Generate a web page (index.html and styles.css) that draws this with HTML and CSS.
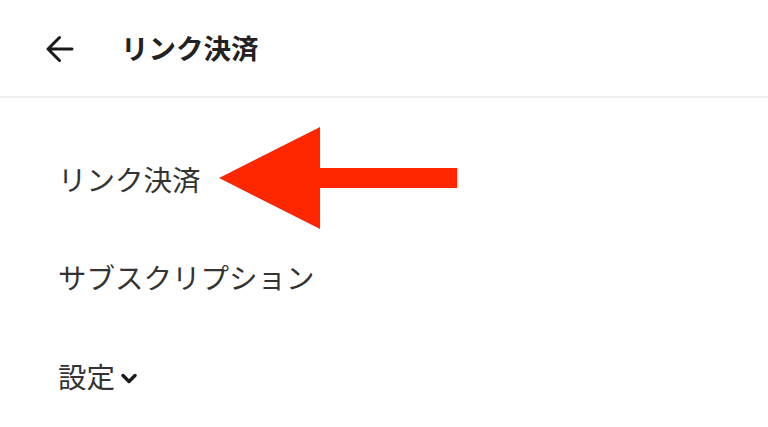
FILE: index.html
```html
<!DOCTYPE html>
<html lang="ja">
<head>
<meta charset="utf-8">
<link rel="stylesheet" href="styles.css">
</head>
<body>
<header class="topbar">
  <svg class="back" width="28" height="28" viewBox="0 0 28 28" aria-hidden="true">
    <path d="M26 14H2.5M13.5 2.5L2 14l11.5 11.5" fill="none" stroke="#1a1a1a" stroke-width="3" stroke-linecap="round" stroke-linejoin="round"/>
  </svg>
  <h1 class="title">リンク決済</h1>
</header>
<nav class="menu">
  <div class="item">リンク決済</div>
  <div class="item">サブスクリプション</div>
  <div class="item">設定<svg class="chev" width="16" height="12" viewBox="0 0 16 12" aria-hidden="true"><path d="M2 2.5l6 6 6-6" fill="none" stroke="#1a1a1a" stroke-width="3.4" stroke-linecap="round" stroke-linejoin="round"/></svg></div>
</nav>
<svg class="pointer" width="240" height="104" viewBox="0 0 240 104" aria-hidden="true">
  <polygon points="0,51 101,0 101,41 238,41 238,61 101,61 101,102" fill="#ff2700"/>
</svg>
</body>
</html>
```
FILE: styles.css
```css
html, body {
  margin: 0;
  padding: 0;
  background: #fff;
}
body {
  font-family: "Noto Sans CJK JP", "Noto Sans", sans-serif;
  position: relative;
  width: 768px;
  height: 427px;
  overflow: hidden;
}
.topbar {
  display: flex;
  align-items: center;
  height: 96px;
  padding-left: 46px;
  border-bottom: 2px solid #efefef;
  box-sizing: content-box;
}
.back {
  display: block;
  margin-top: 1px;
}
.title {
  margin: 0 0 0 47px;
  font-size: 27.5px;
  font-weight: 700;
  color: #222;
  line-height: 1;
}
.menu {
  padding: 32px 0 0 58px;
}
.item {
  height: 98px;
  display: flex;
  align-items: center;
  font-size: 28.5px;
  color: #333;
  line-height: 1;
}
.item:last-child {
  height: 100px;
}
.chev {
  display: block;
  margin-left: 6px;
  margin-top: 6px;
}
.pointer {
  position: absolute;
  left: 219px;
  top: 127px;
}
```
